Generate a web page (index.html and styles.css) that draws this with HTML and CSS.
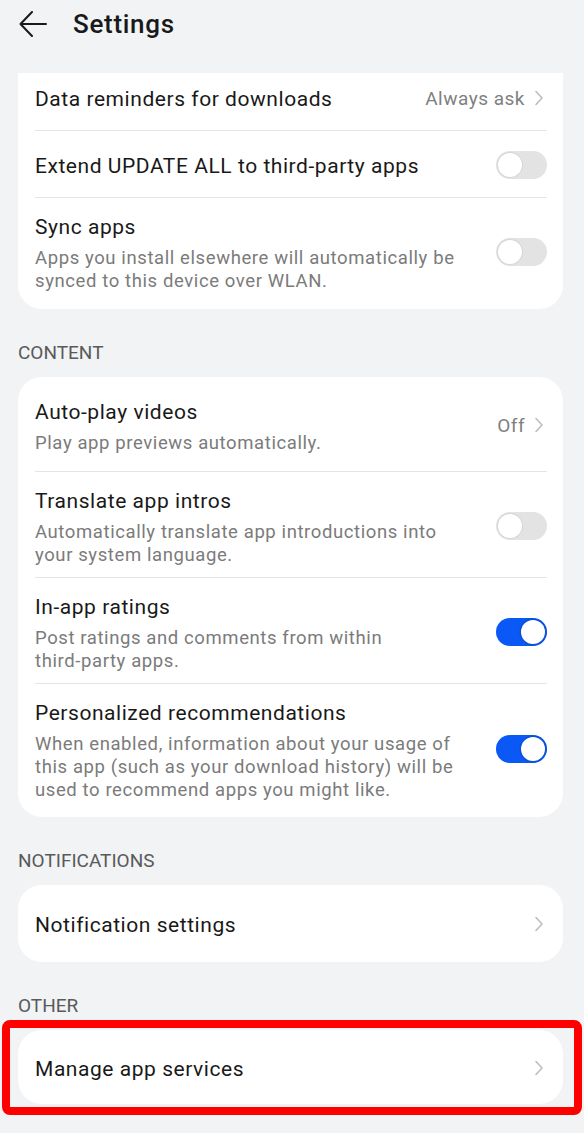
FILE: index.html
```html
<!DOCTYPE html>
<html lang="en">
<head>
<meta charset="utf-8">
<title>Settings</title>
<link rel="stylesheet" href="styles.css">
</head>
<body>
<header class="topbar">
  <svg class="back" width="28" height="26" viewBox="0 0 28 26"><path d="M1.5 13H27M13 1L1.5 13L13 25" fill="none" stroke="#1a1a1a" stroke-width="2" stroke-linecap="round" stroke-linejoin="round"/></svg>
  <h1 class="title">Settings</h1>
</header>

<section class="card card-clipped">
  <div class="row row-clipped">
    <div class="text"><div class="label">Data reminders for downloads</div></div>
    <div class="value">Always ask <svg class="chev" width="10" height="16" viewBox="0 0 10 16"><path d="M2 1.5L8 8L2 14.5" fill="none" stroke="#bdbdbd" stroke-width="1.6" stroke-linecap="round" stroke-linejoin="round"/></svg></div>
  </div>
  <div class="row">
    <div class="text"><div class="label">Extend UPDATE ALL to third-party apps</div></div>
    <span class="switch"><span class="knob"></span></span>
  </div>
  <div class="row">
    <div class="text"><div class="label">Sync apps</div><div class="sub">Apps you install elsewhere will automatically be synced to this device over WLAN.</div></div>
    <span class="switch"><span class="knob"></span></span>
  </div>
</section>

<h2 class="section">CONTENT</h2>
<section class="card">
  <div class="row row-tall">
    <div class="text"><div class="label">Auto-play videos</div><div class="sub">Play app previews automatically.</div></div>
    <div class="value">Off <svg class="chev" width="10" height="16" viewBox="0 0 10 16"><path d="M2 1.5L8 8L2 14.5" fill="none" stroke="#bdbdbd" stroke-width="1.6" stroke-linecap="round" stroke-linejoin="round"/></svg></div>
  </div>
  <div class="row">
    <div class="text"><div class="label">Translate app intros</div><div class="sub">Automatically translate app introductions into your system language.</div></div>
    <span class="switch"><span class="knob"></span></span>
  </div>
  <div class="row">
    <div class="text"><div class="label">In-app ratings</div><div class="sub">Post ratings and comments from within <span class="nowrap">third-party</span> apps.</div></div>
    <span class="switch on"><span class="knob"></span></span>
  </div>
  <div class="row">
    <div class="text"><div class="label">Personalized recommendations</div><div class="sub">When enabled, information about your usage of this app (such as your download history) will be used to recommend apps you might like.</div></div>
    <span class="switch on"><span class="knob"></span></span>
  </div>
</section>

<h2 class="section">NOTIFICATIONS</h2>
<section class="card card-single">
  <div class="row">
    <div class="text"><div class="label">Notification settings</div></div>
    <svg class="chev" width="10" height="16" viewBox="0 0 10 16"><path d="M2 1.5L8 8L2 14.5" fill="none" stroke="#bdbdbd" stroke-width="1.6" stroke-linecap="round" stroke-linejoin="round"/></svg>
  </div>
</section>

<h2 class="section section-other">OTHER</h2>
<div class="highlight">
  <section class="card card-in-highlight">
    <div class="row">
      <div class="text"><div class="label">Manage app services</div></div>
      <svg class="chev" width="10" height="16" viewBox="0 0 10 16"><path d="M2 1.5L8 8L2 14.5" fill="none" stroke="#bdbdbd" stroke-width="1.6" stroke-linecap="round" stroke-linejoin="round"/></svg>
    </div>
  </section>
</div>
</body>
</html>
```

FILE: styles.css
```css
* { box-sizing: border-box; }
html, body { margin: 0; padding: 0; }
body {
  background: #f1f3f5;
  font-family: Roboto, "Noto Sans", "Liberation Sans", sans-serif;
  color: #1a1a1a;
  width: 584px;
  height: 1133px;
  overflow: hidden;
}
.topbar {
  height: 48px;
  display: flex;
  align-items: center;
  padding: 0 0 0 19px;
  margin-bottom: 25px;
}
.back { display: block; margin-right: 26px; }
.title {
  margin: 0;
  font-size: 26px;
  font-weight: 500;
  color: #191919;
  letter-spacing: 0.7px;
}
.card {
  background: #fff;
  border-radius: 24px;
  margin: 0 21px 0 18px;
  padding: 6px 16px 5px 17px;
}
.card-clipped {
  border-top-left-radius: 0;
  border-top-right-radius: 0;
  padding-top: 0;
  padding-bottom: 6px;
}
.card-single { padding-top: 4px; padding-bottom: 6px; }
.row {
  display: flex;
  align-items: center;
  min-height: 67px;
  padding: 12px 0 10px;
  border-bottom: 1px solid #e4e4e4;
  gap: 12px;
}
.row:last-child { border-bottom: none; }
.row-clipped {
  min-height: 58px;
  padding: 0 0 7px;
}
.row-tall { padding-bottom: 16px; }
.text { flex: 1; min-width: 0; padding-right: 24px; }
.label {
  font-size: 21px;
  line-height: 30px;
  letter-spacing: 0.55px;
  color: #191919;
  padding-top: 2px;
}
.sub {
  margin-top: 5px;
  font-size: 18.5px;
  line-height: 23px;
  letter-spacing: 0.6px;
  color: #7b7b7b;
}
.nowrap { white-space: nowrap; }
.value {
  display: flex;
  align-items: center;
  gap: 9px;
  font-size: 19px;
  letter-spacing: 0.5px;
  color: #808080;
}
.chev { display: block; flex: none; margin-right: 3px; }
.switch {
  flex: none;
  position: relative;
  width: 51px;
  height: 28px;
  border-radius: 14px;
  background: #e3e3e3;
}
.knob {
  position: absolute;
  top: 2px;
  left: 2px;
  width: 24px;
  height: 24px;
  border-radius: 50%;
  background: #fff;
  box-shadow: 0 0 0 1px #d6d6d6;
}
.switch.on { background: #0a59f7; }
.switch.on .knob {
  left: 25px;
  box-shadow: 0 0 0 1.5px #0a4fd6;
}
.section {
  margin: 0;
  padding: 31px 0 12px 18px;
  font-size: 19px;
  line-height: 25px;
  font-weight: 400;
  color: #5a5a5a;
}
.section-other { padding-bottom: 2px; }
.highlight {
  margin: 0 2px;
  border: 8px solid #ff0000;
  border-radius: 8px;
  padding: 2px 11px 3px 8px;
}
.card-in-highlight { margin: 0; padding-top: 3px; padding-bottom: 4px; }
```
